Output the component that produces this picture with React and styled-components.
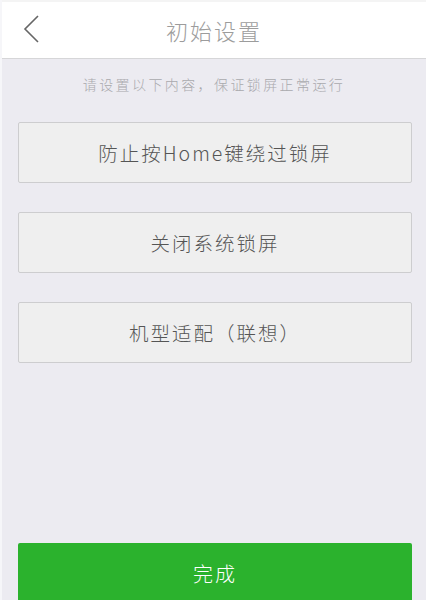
import React from 'react';
import styled, { createGlobalStyle } from 'styled-components';

const GlobalStyle = createGlobalStyle`
  body {
    margin: 0;
    background: #ecebf1;
    font-family: "Noto Sans CJK SC", "Noto Sans", sans-serif;
  }
`;

const Page = styled.div`
  width: 426px;
  box-sizing: border-box;
  border-left: 2px solid #f6f6f9;
  background: #ecebf1;
  display: flex;
  flex-direction: column;
`;

const Header = styled.div`
  height: 56px;
  background: #fff;
  border-top: 2px solid #f4f4f4;
  border-bottom: 1px solid #d6d6d8;
  display: flex;
  align-items: center;
  justify-content: center;
  position: relative;
`;

const Back = styled.button`
  position: absolute;
  left: 20px;
  top: 12px;
  width: 20px;
  height: 30px;
  padding: 0;
  border: 0;
  background: none;
  cursor: pointer;
`;

const Title = styled.h1`
  margin: 0;
  font-size: 22px;
  font-weight: 300;
  color: #9c9c9c;
  letter-spacing: 2px;
`;

const Hint = styled.p`
  margin: 15px 0 0;
  text-align: center;
  font-size: 14px;
  font-weight: 300;
  color: #a9a9ad;
  letter-spacing: 2.4px;
`;

const List = styled.div`
  display: flex;
  flex-direction: column;
  gap: 29px;
  padding: 0 14px 0 16px;
  margin-top: 28px;
`;

const Option = styled.button`
  height: 61px;
  background: #efefef;
  border: 1px solid #cdcdcf;
  border-radius: 2px;
  font-family: inherit;
  font-size: 19.5px;
  font-weight: 300;
  color: #555;
  letter-spacing: 2px;
  cursor: pointer;
`;

const Done = styled.button`
  margin: 180px 14px 18px 16px;
  height: 60px;
  background: #2bb22d;
  border: 0;
  border-radius: 2px;
  font-family: inherit;
  font-size: 20px;
  font-weight: 300;
  color: #fff;
  letter-spacing: 2px;
  cursor: pointer;
`;

const options = ['防止按Home键绕过锁屏', '关闭系统锁屏', '机型适配（联想）'];

const App = () => {
  return (
    <Page>
      <GlobalStyle />
      <Header>
        <Back>
          <svg width="20" height="30" viewBox="0 0 20 30">
            <path d="M16 2 L3 15 L16 28" fill="none" stroke="#666" strokeWidth="1.6" />
          </svg>
        </Back>
        <Title>初始设置</Title>
      </Header>
      <Hint>请设置以下内容，保证锁屏正常运行</Hint>
      <List>
        {options.map(o => <Option key={o}>{o}</Option>)}
      </List>
      <Done>完成</Done>
    </Page>
  );
};

export default App;
